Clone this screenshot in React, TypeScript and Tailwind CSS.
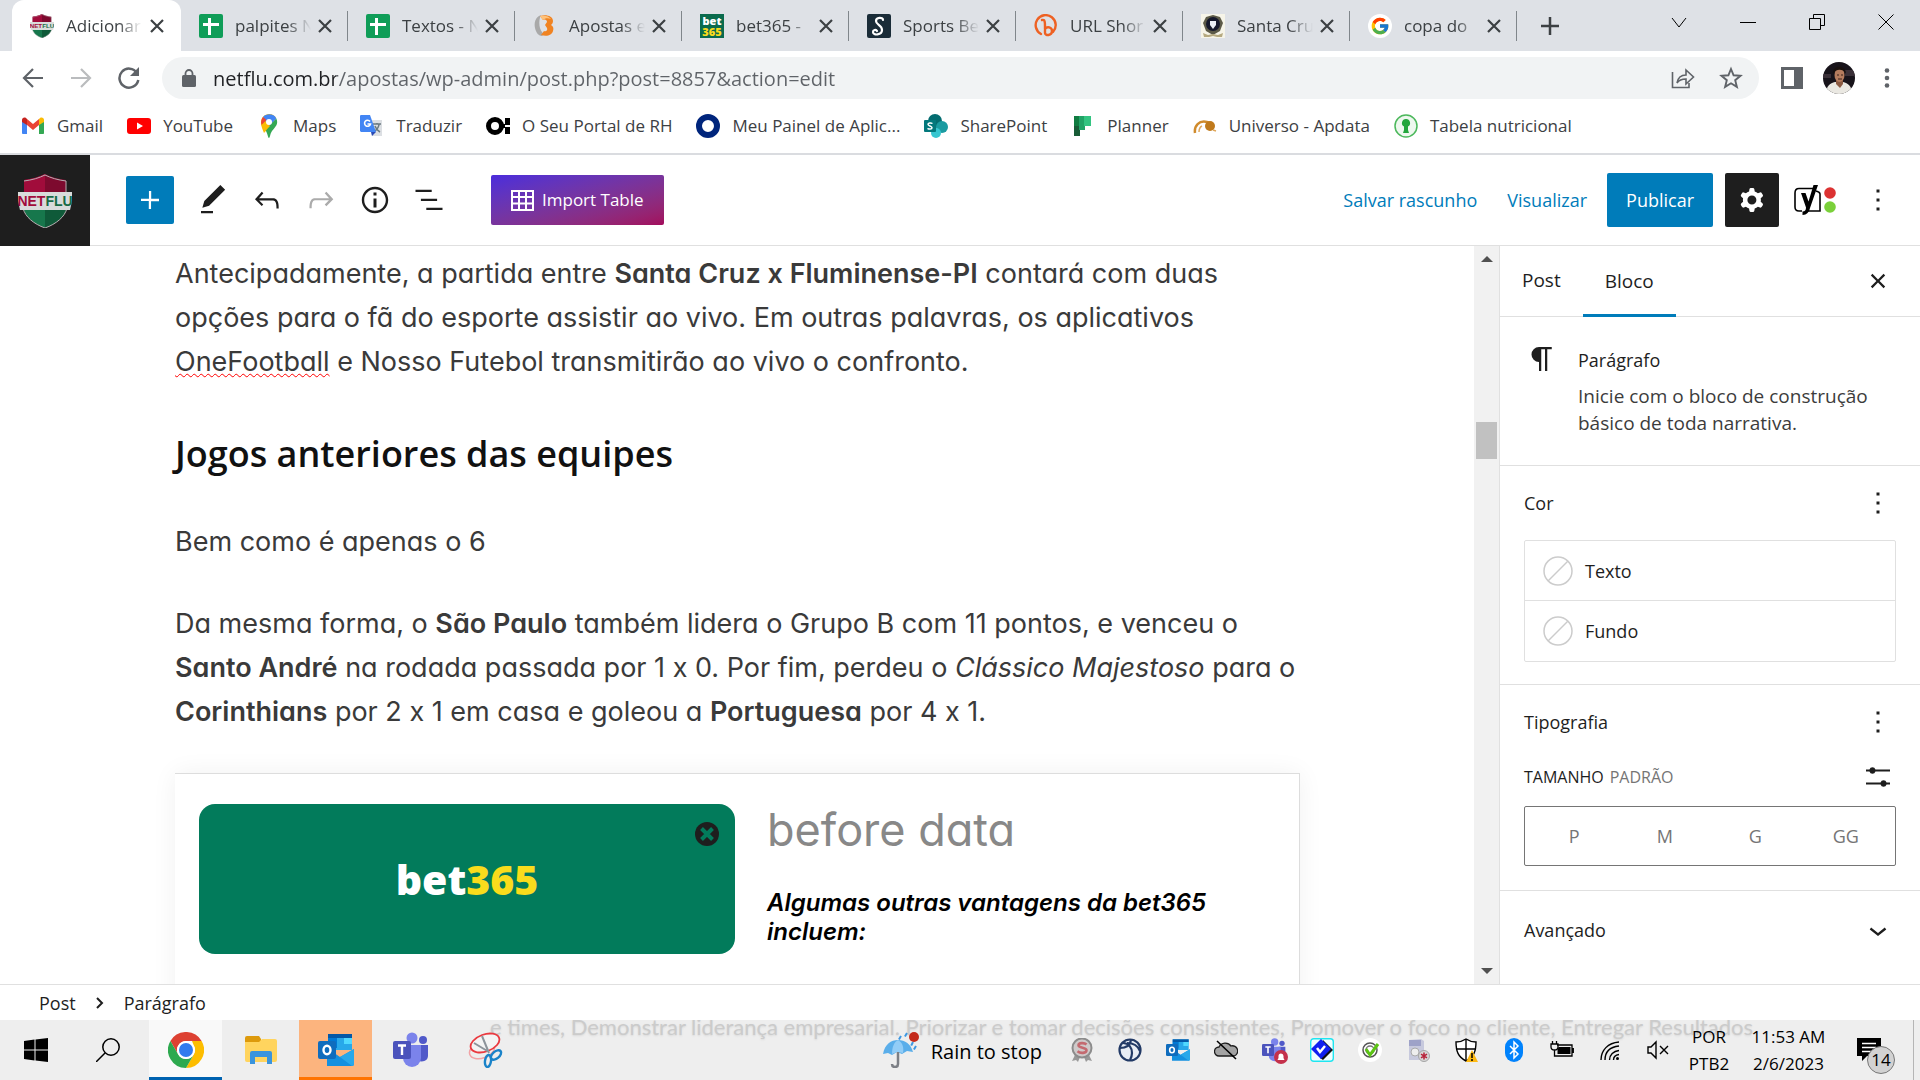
import type { ReactNode } from "react";
import { FcGoogle } from "react-icons/fc";

type Item = { label: string; icon: ReactNode };

function WpIcon({ d, className = "size-9" }: { d: string; className?: string }) {
  return (
    <svg viewBox="0 0 24 24" className={className} fill="currentColor" fillRule="evenodd" aria-hidden="true">
      <path d={d} />
    </svg>
  );
}

const paths = {
  plus: "M18 11.2h-5.2V6h-1.5v5.2H6v1.5h5.2V18h1.5v-5.2H18z",
  edit: "M20.1 5.1L16.9 2 6.2 12.7l-1.3 4.4 4.5-1.3L20.1 5.1zM4 20.8h8v-1.5H4v1.5z",
  undo: "M18.3 11.7c-.6-.6-1.4-.9-2.3-.9H6.7l2.9-3.3-1.1-1-4.5 5L8.5 16l1-1-2.7-2.7H16c.5 0 .9.2 1.3.5 1 1 1 3.4 1 4.5v.3h1.5v-.2c0-1.5 0-4.3-1.5-5.7z",
  redo: "M15.6 6.5l-1.1 1 2.9 3.3H8c-.9 0-1.7.3-2.3.9-1.4 1.5-1.4 4.2-1.4 5.6v.2h1.5v-.3c0-1.1 0-3.5 1-4.5.3-.3.7-.5 1.3-.5h9.2L14.5 15l1.1 1.1 4.6-4.6-4.6-5z",
  info: "M12 3.2c-4.8 0-8.8 3.9-8.8 8.8 0 4.8 3.9 8.8 8.8 8.8 4.8 0 8.8-3.9 8.8-8.8 0-4.8-4-8.8-8.8-8.8zm0 16c-4 0-7.2-3.3-7.2-7.2C4.8 8 8 4.8 12 4.8s7.2 3.3 7.2 7.2c0 4-3.2 7.2-7.2 7.2zM11 17h2v-6h-2v6zm0-8h2V7h-2v2z",
  list: "M13.8 5.2H3v1.5h10.8V5.2zm-3.6 12v1.5H21v-1.5H10.2zm7.2-6H6.6v1.5h10.8v-1.5z",
  more: "M13 19h-2v-2h2v2zm0-6h-2v-2h2v2zm0-6h-2V5h2v2z",
  cog: "M10.289 4.836A1 1 0 0111.275 4h1.306a1 1 0 01.987.836l.244 1.466c.787.26 1.503.679 2.108 1.218l1.393-.522a1 1 0 011.216.437l.653 1.13a1 1 0 01-.23 1.273l-1.148.944a6.025 6.025 0 010 2.435l1.149.946a1 1 0 01.23 1.272l-.653 1.13a1 1 0 01-1.216.437l-1.394-.522c-.605.54-1.32.958-2.108 1.218l-.244 1.466a1 1 0 01-.987.836h-1.306a1 1 0 01-.986-.836l-.244-1.466a5.995 5.995 0 01-2.108-1.218l-1.394.522a1 1 0 01-1.217-.436l-.653-1.131a1 1 0 01.23-1.272l1.149-.946a6.026 6.026 0 010-2.435l-1.148-.944a1 1 0 01-.23-1.272l.653-1.131a1 1 0 011.217-.437l1.393.522a5.994 5.994 0 012.108-1.218l.244-1.466zM14.929 12a3 3 0 11-6 0 3 3 0 016 0z",
  close: "M12 13.06l3.712 3.713 1.061-1.06L13.061 12l3.712-3.712-1.06-1.06L12 10.938 8.288 7.227l-1.061 1.06L10.939 12l-3.712 3.712 1.06 1.061L12 13.061z",
  chevronDown: "M17.5 11.6L12 16l-5.5-4.4.9-1.2L12 14l4.5-3.6 1 1.2z",
  paragraph: "M9.996 14v-.225H10V20h1.5V5.5H14V20h1.5V5.5h3V4H9.996a5 5 0 000 10z",
  sliders: "M4 7h2.3a2.1 2.1 0 014 0H20v1.4h-9.7a2.1 2.1 0 01-4 0H4V7zm0 8.6h9.7a2.1 2.1 0 014 0H20V17h-2.3a2.1 2.1 0 01-4 0H4v-1.400z",
};

function NetfluLogo({ className = "size-6" }: { className?: string }) {
  return (
    <svg viewBox="0 0 54 54" className={className} aria-hidden="true">
      <path d="M6 6C14 5 21 3 27 0c6 3 13 5 21 6v14H6z" fill="#7d0a2e" />
      <path d="M6 6C14 5 21 3 27 0v20H6z" fill="#a10c3b" />
      <path d="M5 33h44c-2 10-11 17-22 21C16 50 7 43 5 33z" fill="#17774c" />
      <path d="M27 33h22c-2 10-11 17-22 21z" fill="#0f5a39" />
      <path d="M6 7C14 6 21 4 27 1c6 3 13 5 21 6v12M5 34c2 9 11 16 22 20 11-4 20-11 22-20" fill="none" stroke="#b9aeb2" strokeWidth="1" />
      <path d="M0 18h54v9l-2 9H2L0 27z" fill="#d9dcdb" />
      <text x="27" y="32" textAnchor="middle" fontFamily="Liberation Sans Narrow, Liberation Sans, sans-serif" fontWeight="700" fontSize="14" fill="#a10c3b">
        NET<tspan fill="#176b45">FLU</tspan>
      </text>
    </svg>
  );
}

function SheetsIcon() {
  return (
    <svg viewBox="0 0 24 24" className="size-6" aria-hidden="true">
      <rect width="24" height="24" rx="2" fill="#0f9d58" />
      <path d="M9 4h3v5h8v3h-8v9H9v-9H4V9h5z" fill="#fff" />
    </svg>
  );
}

const tabs: (Item & { active?: boolean })[] = [
  { label: "Adicionar", icon: <NetfluLogo />, active: true },
  { label: "palpites N", icon: <SheetsIcon /> },
  { label: "Textos - N", icon: <SheetsIcon /> },
  {
    label: "Apostas e",
    icon: (
      <svg viewBox="0 0 24 24" className="size-6" aria-hidden="true">
        <path d="M8 1C2 3 1 9 2 14c1 5 4 8 7 8l2-2C6 17 5 7 8 1z" fill="#a9a9a9" />
        <path d="M7 2c6-2 13 0 13 5 0 2-1 3-2 4 2 1 3 3 2 6-1 4-6 6-12 4l3-4c2 1 4-1 3-3l-2-3 2-3c0-2-2-3-4-2z" fill="#f08322" />
        <path d="M7 2c5-1 9 0 11 3-3-1-6-1-8 1z" fill="#ffc27a" />
      </svg>
    ),
  },
  {
    label: "bet365 -",
    icon: (
      <svg viewBox="0 0 24 24" className="size-6" aria-hidden="true">
        <rect width="24" height="24" fill="#0a6b4d" />
        <text x="12" y="10.500" textAnchor="middle" fontFamily="Open Sans, sans-serif" fontWeight="800" fontSize="11" fill="#fff">bet</text>
        <text x="12" y="22" textAnchor="middle" fontFamily="Open Sans, sans-serif" fontWeight="800" fontSize="11" fill="#f9dc1c">365</text>
      </svg>
    ),
  },
  {
    label: "Sports Be",
    icon: (
      <svg viewBox="0 0 24 24" className="size-6" aria-hidden="true">
        <rect width="24" height="24" rx="2" fill="#1a2c38" />
        <path d="M16 6c0-3-7-3-7 1 0 4 6 4 6 9 0 5-9 6-9 2 0-2 3-3 4-1" fill="none" stroke="#fff" strokeWidth="2.200" strokeLinecap="round" />
      </svg>
    ),
  },
  {
    label: "URL Shor",
    icon: (
      <svg viewBox="0 0 24 24" className="size-6" fill="none" stroke="#ee6123" strokeWidth="2.400" strokeLinecap="round" aria-hidden="true">
        <path d="M7 20A10 10 0 1 1 19 18" />
        <path d="M8 6c3-1 3 3 3 6v7c0 3 7 3 7-2 0-4-5-5-7-2" />
      </svg>
    ),
  },
  {
    label: "Santa Cru",
    icon: (
      <svg viewBox="0 0 24 24" className="size-6" aria-hidden="true">
        <rect width="24" height="24" fill="#f6f4e8" />
        <path d="M5 3l7-2 7 2 3 6-3 8-7 4-7-4-3-8z" fill="#5c5a48" />
        <circle cx="12" cy="10" r="7" fill="#15182c" />
        <path d="M9 7h6v4l-3 4-3-4z" fill="#e9edf5" />
        <path d="M2 19l5 2 5-1 5 1 5-2-1 4h-5l-4-1-4 1H3z" fill="#b5a980" />
      </svg>
    ),
  },
  {
    label: "copa do",
    icon: (
      <span className="flex size-6 items-center justify-center rounded-full bg-white">
        <FcGoogle className="size-5" />
      </span>
    ),
  },
];

const bookmarks: Item[] = [
  {
    label: "Gmail",
    icon: (
      <svg viewBox="0 0 24 24" className="size-6" aria-hidden="true">
        <path d="M1 6v13c0 1 1 1 1 1h4V10z" fill="#4285f4" />
        <path d="M23 6v13c0 1-1 1-1 1h-4V10z" fill="#34a853" />
        <path d="M1 6c0-2 2-3 4-2l1 1v6L1 8z" fill="#c5221f" />
        <path d="M23 6c0-2-2-3-4-2l-1 1v6l5-3z" fill="#fbbc04" />
        <path d="M6 5l6 5 6-5v6l-6 5-6-5z" fill="#ea4335" />
      </svg>
    ),
  },
  {
    label: "YouTube",
    icon: (
      <svg viewBox="0 0 24 24" className="size-6" aria-hidden="true">
        <rect y="4" width="24" height="16" rx="3" fill="#f00" />
        <path d="M10 8.500v7l6-3.500z" fill="#fff" />
      </svg>
    ),
  },
  {
    label: "Maps",
    icon: (
      <svg viewBox="0 0 24 24" className="size-6" aria-hidden="true">
        <path d="M12 0c3.500 0 6 1.700 7.300 4.400L7 19C5.500 15 4 12.500 4 8.500 4 3.500 8 0 12 0z" fill="#fbbc04" />
        <path d="M19.300 4.400C22 10 18 13 15 17c-2 3-2 7-3 7s-1-3-3-7l-1-1.500z" fill="#34a853" />
        <path d="M6 3c3-4 11-4 13.300 1.400L12 12 9 8z" fill="#4285f4" />
        <path d="M4.500 11l5-5L6 3C4 5.500 3.700 8.500 4.500 11z" fill="#ea4335" />
        <path d="M4.500 11L10 9l3 3-5 5.500C6 14.500 5 13 4.500 11z" fill="#fbbc04" />
        <circle cx="12" cy="8" r="3" fill="#fff" />
      </svg>
    ),
  },
  {
    label: "Traduzir",
    icon: (
      <svg viewBox="0 0 24 24" className="size-6" aria-hidden="true">
        <path d="M9 6h13v16H12z" fill="#dcdfe3" />
        <path d="M13 10h8M17 9v1m2 0c0 4-3 6-5 8m1-6c1 3 3 5 5 6" stroke="#6a7a80" strokeWidth="1.500" fill="none" />
        <path d="M0 2c0-1 1-1 1-1h9l6 17H1l-1-1z" fill="#4285f4" />
        <path d="M11 18h5l-4 4z" fill="#2a4bb5" />
        <path d="M10 7.500a3 3 0 1 0 .5 2.500H7.500" stroke="#fff" strokeWidth="1.600" fill="none" />
      </svg>
    ),
  },
  {
    label: "O Seu Portal de RH",
    icon: (
      <svg viewBox="0 0 24 24" className="size-6" aria-hidden="true">
        <circle cx="9" cy="12" r="6.500" fill="none" stroke="#000" strokeWidth="5" />
        <path d="M19 4h5v7h-5zM19 13h5v7h-5zM14 10h5v4h-5z" fill="#000" />
      </svg>
    ),
  },
  {
    label: "Meu Painel de Aplic...",
    icon: (
      <svg viewBox="0 0 24 24" className="size-6" aria-hidden="true">
        <circle cx="12" cy="12" r="9" fill="none" stroke="#00257c" strokeWidth="6" />
      </svg>
    ),
  },
  {
    label: "SharePoint",
    icon: (
      <svg viewBox="0 0 24 24" className="size-6" aria-hidden="true">
        <circle cx="11" cy="7" r="7" fill="#036c70" />
        <circle cx="18" cy="13" r="6" fill="#1a9ba1" />
        <circle cx="12" cy="19" r="5" fill="#37c6d0" />
        <rect y="6" width="12" height="12" rx="1" fill="#03787c" />
        <path d="M8.500 9.500C7 8.500 4 8.700 4 10.300S8 12 8 13.700s-3 1.700-4.500.6" stroke="#fff" strokeWidth="1.500" fill="none" />
      </svg>
    ),
  },
  {
    label: "Planner",
    icon: (
      <svg viewBox="0 0 24 24" className="size-6" aria-hidden="true">
        <path d="M3 2h6v20H3z" fill="#185c37" />
        <path d="M3 2h6v10H3z" fill="#107c41" />
        <path d="M8 2h6v14H8z" fill="#21a366" />
        <path d="M13 2h7v10h-7z" fill="#33c481" />
      </svg>
    ),
  },
  {
    label: "Universo - Apdata",
    icon: (
      <svg viewBox="0 0 24 24" className="size-6" aria-hidden="true">
        <path d="M2 19c-1-7 4-13 12-11 3 1 4 3 4 5" fill="none" stroke="#d08b2c" strokeWidth="2.500" />
        <circle cx="17" cy="12" r="5" fill="#c07a1c" />
        <path d="M6 18c0-3 1-5 3-6M20 16l3 1" stroke="#e0a85c" strokeWidth="1.500" fill="none" />
      </svg>
    ),
  },
  {
    label: "Tabela nutricional",
    icon: (
      <svg viewBox="0 0 24 24" className="size-6" aria-hidden="true">
        <circle cx="12" cy="12" r="11" fill="#eef8ef" stroke="#4cb85c" strokeWidth="1.500" />
        <path d="M12 5a4 4 0 0 0-2 7.500V16l-1 3h6l-1-3v-3.500A4 4 0 0 0 12 5z" fill="#22a63c" />
      </svg>
    ),
  },
];

function TabStrip() {
  return (
    <div className="flex h-[51px] shrink-0 bg-[#dee1e6] pl-3">
      {tabs.map((tab) => (
        <div
          key={tab.label}
          className={`relative flex h-full items-center pl-[18px] ${tab.active ? "w-[169px] rounded-t-xl bg-white pr-4" : "w-[167px] pr-[15px]"}`}
        >
          <span className="shrink-0">{tab.icon}</span>
          <span className="ml-3 w-20 whitespace-nowrap text-[17px] text-[#3c4043] [mask-image:linear-gradient(90deg,#000_65%,transparent_95%)]">
            {tab.label}
          </span>
          <button aria-label="Fechar guia" className="ml-auto text-[#3c4043]">
            <svg viewBox="0 0 16 16" className="size-4" stroke="currentColor" strokeWidth="2.200" aria-hidden="true">
              <path d="M2 2l12 12M14 2L2 14" />
            </svg>
          </button>
          {!tab.active && <span className="absolute right-0 top-[11px] h-[30px] w-px bg-[#80868b]" />}
        </div>
      ))}
      <button aria-label="Nova guia" className="ml-6 self-center text-[#3c4043]">
        <svg viewBox="0 0 18 18" className="size-[18px]" stroke="currentColor" strokeWidth="2.500" aria-hidden="true">
          <path d="M9 0v18M0 9h18" />
        </svg>
      </button>
      <div className="ml-auto flex h-[43px] text-black">
        {[
          ["Pesquisar guias", "M1 4l7 9 7-9"],
          ["Minimizar", "M0 8.500h16"],
          ["Restaurar", "M.5 4.500h11v11H.5zM4.500 4V.5h11v11H12"],
          ["Fechar", "M.5.5l15 15M15.500.5l-15 15"],
        ].map(([label, d]) => (
          <button key={label} aria-label={label} className="flex w-[69px] items-center justify-center">
            <svg viewBox="0 0 16 16" className="size-4" fill="none" stroke="currentColor" aria-hidden="true">
              <path d={d} />
            </svg>
          </button>
        ))}
      </div>
    </div>
  );
}

function AddressBar() {
  return (
    <div className="flex shrink-0 items-center bg-white px-[21px] pt-1.5 text-[#5f6368]">
      <div className="flex gap-6">
        <button aria-label="Voltar">
          <svg viewBox="0 0 24 24" className="size-6" fill="none" stroke="currentColor" strokeWidth="2.200" aria-hidden="true">
            <path d="M22 12H3M12 3l-9 9 9 9" />
          </svg>
        </button>
        <button aria-label="Avançar" className="text-[#babcbe]">
          <svg viewBox="0 0 24 24" className="size-6" fill="none" stroke="currentColor" strokeWidth="2.200" aria-hidden="true">
            <path d="M2 12h19M12 3l9 9-9 9" />
          </svg>
        </button>
        <button aria-label="Recarregar">
          <svg viewBox="0 0 24 24" className="size-6" fill="none" stroke="currentColor" strokeWidth="2.500" aria-hidden="true">
            <path d="M20 7a9.500 9.500 0 1 0 1.300 7" />
            <path d="M22 1v9h-9z" fill="currentColor" stroke="none" />
          </svg>
        </button>
      </div>
      <div className="ml-[21px] flex h-[42px] flex-1 items-center rounded-full bg-[#f1f3f4] pl-[20px] pr-4">
        <svg viewBox="0 0 14 18" className="mr-[17px] h-[18px] w-3.5 shrink-0" aria-hidden="true">
          <rect y="6" width="14" height="12" rx="1.500" fill="#5f6368" />
          <path d="M3.500 7V4.500a3.500 3.500 0 0 1 7 0V7" fill="none" stroke="#5f6368" strokeWidth="1.800" />
        </svg>
        <input
          aria-label="Barra de endereço"
          defaultValue="netflu.com.br/apostas/wp-admin/post.php?post=8857&action=edit"
          className="min-w-0 flex-1 bg-[linear-gradient(90deg,#202124_123px,#5f6368_123px)] bg-clip-text pt-0.5 text-xl text-transparent outline-none"
        />
        <button aria-label="Compartilhar" className="mr-6">
          <svg viewBox="0 0 24 24" className="size-6" fill="none" stroke="currentColor" strokeWidth="1.600" aria-hidden="true">
            <path d="M1.500 6v15.500H18V17" />
            <path d="M6 17c1-6 5-8 9-8V4l7.500 7-7.500 7v-5c-4 0-7 1-9 4z" />
          </svg>
        </button>
        <button aria-label="Adicionar aos favoritos">
          <svg viewBox="0 0 24 24" className="size-6" fill="none" stroke="currentColor" strokeWidth="1.900" aria-hidden="true">
            <path d="M12 3l2.600 6.300 6.900.5-5.300 4.400 1.700 6.700L12 17.300 6.100 20.900l1.700-6.700-5.300-4.400 6.900-.5z" />
          </svg>
        </button>
      </div>
      <button aria-label="Painel lateral" className="ml-[22px]">
        <svg viewBox="0 0 22 22" className="size-[22px]" aria-hidden="true">
          <path d="M0 0h22v22H0zM3 3v16h10V3z" fill="currentColor" fillRule="evenodd" />
        </svg>
      </button>
      <button aria-label="Perfil" className="ml-5 size-8 overflow-hidden rounded-full">
        <svg viewBox="0 0 32 32" className="size-8" aria-hidden="true">
          <rect width="32" height="32" fill="#17131a" />
          <path d="M22 8h10v6H22zM0 12h8v4H0z" fill="#3a3038" />
          <path d="M3 32c0-8 4-11 9-12h8c5 1 9 4 9 12z" fill="#eae8e2" />
          <path d="M13 16h7v6l-3 4-4-4z" fill="#8a5a42" />
          <ellipse cx="16.500" cy="13" rx="5" ry="7" fill="#b57c5e" />
          <path d="M10 12c-1-9 13-10 13 0-2-5-10-6-13 0z" fill="#18100d" />
          <path d="M14 13h2M18 13h2M15 17h4" stroke="#3c221a" />
        </svg>
      </button>
      <button aria-label="Menu" className="ml-5">
        <svg viewBox="0 0 24 24" className="size-6" fill="currentColor" aria-hidden="true">
          <circle cx="12" cy="4.500" r="2.300" />
          <circle cx="12" cy="12" r="2.300" />
          <circle cx="12" cy="19.500" r="2.300" />
        </svg>
      </button>
    </div>
  );
}

function BookmarksBar() {
  return (
    <nav className="flex h-14 shrink-0 items-center gap-6 border-b-2 border-[#dadce0] bg-white pl-[21px]">
      {bookmarks.map((b) => (
        <a key={b.label} href="#" className="flex items-center gap-3 whitespace-nowrap text-[17px] text-[#3c4043]">
          {b.icon}
          {b.label}
        </a>
      ))}
    </nav>
  );
}

function EditorHeader() {
  return (
    <header className="flex h-[91px] shrink-0 items-center border-b border-[#e0e0e0] bg-white pr-6 text-[#1e1e1e]">
      <a href="#" aria-label="Ver posts" className="flex h-[92px] w-[90px] items-center justify-center self-start bg-[#1e1e1e]">
        <NetfluLogo className="size-[54px]" />
      </a>
      <button aria-label="Adicionar bloco" className="ml-9 flex size-12 items-center justify-center rounded-xs bg-[#007cba] text-white">
        <WpIcon d={paths.plus} />
      </button>
      <div className="ml-[21px] flex gap-[18px]">
        <button aria-label="Ferramentas"><WpIcon d={paths.edit} /></button>
        <button aria-label="Desfazer"><WpIcon d={paths.undo} /></button>
        <button aria-label="Refazer" className="text-[#ababab]"><WpIcon d={paths.redo} /></button>
        <button aria-label="Detalhes"><WpIcon d={paths.info} /></button>
        <button aria-label="Visualização em lista"><WpIcon d={paths.list} /></button>
      </div>
      <button className="ml-11 flex h-[50px] items-center gap-2 rounded-xs bg-linear-to-br from-[#4b2bdc] to-[#a3095c] px-5 text-[17px] font-medium text-white">
        <svg viewBox="0 0 23 21" className="h-[21px] w-[23px]" fill="none" stroke="currentColor" strokeWidth="2" aria-hidden="true">
          <path d="M1 1h21v19H1zM1 7h21M1 13.500h21M8 1v19M15 1v19" />
        </svg>
        Import Table
      </button>
      <div className="ml-auto flex items-center text-lg">
        <button className="mr-[30px] text-[#007cba]">Salvar rascunho</button>
        <button className="mr-5 text-[#007cba]">Visualizar</button>
        <button className="h-[54px] rounded-xs bg-[#007cba] px-[19px] font-medium text-white">Publicar</button>
        <button aria-label="Opções" className="ml-3 flex size-[54px] items-center justify-center rounded-xs bg-[#1e1e1e] text-white">
          <WpIcon d={paths.cog} />
        </button>
        <button aria-label="Yoast SEO" className="ml-[15px]">
          <svg viewBox="0 0 44 32" className="h-8 w-11" aria-hidden="true">
            <path d="M19 4.500H5Q1 4.500 1 9v14q0 4 4 4h3M22 7q4 1 4 3v17H13" fill="none" stroke="#000" strokeWidth="1.600" />
            <path d="M7 9h4.500l3 8.500L19.500 1H24l-8 23c-1 4-3 7-7.500 7v-3.500c2.500 0 3.500-1.500 3.500-4z" fill="#000" />
            <circle cx="36" cy="9" r="5.800" fill="#dc3232" />
            <circle cx="36" cy="23" r="5.800" fill="#7ad03a" />
          </svg>
        </button>
        <button aria-label="Opções do editor" className="ml-[22px]"><WpIcon d={paths.more} /></button>
      </div>
    </header>
  );
}

function Canvas() {
  return (
    <main className="min-w-0 flex-1 overflow-hidden bg-white pl-[175px] pt-1.5 font-[Inter,sans-serif] text-[27px] leading-[44px] text-[#3a3a3a] [font-feature-settings:'cv11','calt'_0]">
      <div className="w-[1125px] max-w-full">
        <p>
          Antecipadamente, a partida entre <strong className="font-semibold">Santa Cruz x Fluminense-PI</strong> contará com duas
          <br />
          opções para o fã do esporte assistir ao vivo. Em outras palavras, os aplicativos
          <br />
          <span className="underline decoration-[#f00] decoration-wavy decoration-1 underline-offset-2">OneFootball</span> e Nosso Futebol transmitirão ao vivo o confronto.
        </p>
        <h2 className="mt-[46px] font-['Open_Sans',sans-serif] text-4xl leading-[48px] font-semibold text-[#111]">Jogos anteriores das equipes</h2>
        <p className="mt-[42px]">Bem como é apenas o 6</p>
        <p className="mt-[38px]">
          Da mesma forma, o <strong className="font-semibold">São Paulo</strong> também lidera o Grupo B com 11 pontos, e venceu o
          <br />
          <strong className="font-semibold">Santo André</strong> na rodada passada por 1 x 0. Por fim, perdeu o <em>Clássico Majestoso</em> para o
          <br />
          <strong className="font-semibold">Corinthians</strong> por 2 x 1 em casa e goleou a <strong className="font-semibold">Portuguesa</strong> por 4 x 1.
        </p>
        <section className="mt-[39px] flex h-[400px] gap-8 border-t border-r border-[#dddddd] pl-6 pt-[30px] shadow-[0_0_24px_rgba(0,0,0,0.06)]">
          <div className="relative flex h-[150px] w-[536px] shrink-0 items-center justify-center rounded-2xl bg-[#027b5b] font-['Open_Sans',sans-serif] text-[41px] font-extrabold text-white">
            <span>bet<span className="text-[#f9dc1c]">365</span></span>
            <button aria-label="Remover imagem" className="absolute right-4 top-[18px]">
              <svg viewBox="0 0 24 24" className="size-6" aria-hidden="true">
                <circle cx="12" cy="12" r="12" fill="#1e1e1e" />
                <path d="M6.500 6.500l11 11M17.500 6.500l-11 11" stroke="#027b5b" strokeWidth="4" />
              </svg>
            </button>
          </div>
          <div className="min-w-0 flex-1 pr-[70px]">
            <p className="mb-8 text-[45px] leading-[52px] text-[#888]">before data</p>
            <p className="text-2xl leading-[29px] font-semibold text-black">
              <em>Algumas outras vantagens da bet365 incluem:</em>
            </p>
          </div>
        </section>
      </div>
    </main>
  );
}

function Scrollbar() {
  return (
    <div className="flex w-[25px] shrink-0 flex-col items-center bg-[#f1f1f1] py-2.5" aria-hidden="true">
      <svg viewBox="0 0 12 6" className="h-1.5 w-3"><path d="M0 6l6-6 6 6z" fill="#505050" /></svg>
      <div className="mt-40 h-[37px] w-[21px] bg-[#c1c1c1]" />
      <svg viewBox="0 0 12 6" className="mt-auto h-1.5 w-3"><path d="M0 0l6 6 6-6z" fill="#505050" /></svg>
    </div>
  );
}

function NoColor() {
  return (
    <svg viewBox="0 0 30 30" className="size-[30px]" fill="none" stroke="#ccc" strokeWidth="1.500" aria-hidden="true">
      <circle cx="15" cy="15" r="14" />
      <path d="M5 25L25 5" />
    </svg>
  );
}

function Sidebar() {
  return (
    <aside className="flex w-[421px] shrink-0 flex-col border-l border-[#e0e0e0] bg-white text-lg text-[#1e1e1e]">
      <div className="flex h-[71px] shrink-0 items-stretch border-b border-[#e0e0e0] pr-6 text-[19px] font-medium">
        <button className="px-[22px]">Post</button>
        <button className="-mb-px border-b-3 border-[#007cba] px-[22px] pt-[3px]">Bloco</button>
        <button aria-label="Fechar configurações" className="ml-auto"><WpIcon d={paths.close} /></button>
      </div>
      <div className="flex gap-3 border-b border-[#e0e0e0] px-6 pt-6 pb-7">
        <WpIcon d={paths.paragraph} className="size-9 shrink-0" />
        <div className="pl-1.5">
          <h2 className="mt-1 mb-2 leading-[30px] font-medium">Parágrafo</h2>
          <p className="w-[300px] text-[19px] leading-[27px] text-[#3c3c3c]">Inicie com o bloco de construção básico de toda narrativa.</p>
        </div>
      </div>
      <section className="border-b border-[#e0e0e0] px-6 pb-[22px]">
        <div className="flex h-[74px] items-center justify-between">
          <h2 className="font-medium">Cor</h2>
          <button aria-label="Opções de cor"><WpIcon d={paths.more} /></button>
        </div>
        <div className="divide-y divide-[#e0e0e0] rounded-xs border border-[#e0e0e0]">
          {["Texto", "Fundo"].map((label) => (
            <button key={label} className="flex h-[60px] w-full items-center gap-3 pl-[18px]">
              <NoColor />
              {label}
            </button>
          ))}
        </div>
      </section>
      <section className="border-b border-[#e0e0e0] px-6 pb-6">
        <div className="flex h-[74px] items-center justify-between">
          <h2 className="font-medium">Tipografia</h2>
          <button aria-label="Opções de tipografia"><WpIcon d={paths.more} /></button>
        </div>
        <div className="mb-[11px] flex h-9 items-center text-base font-medium">
          TAMANHO <span className="ml-1.5 text-[#757575]">PADRÃO</span>
          <button aria-label="Definir tamanho personalizado" className="ml-auto"><WpIcon d={paths.sliders} /></button>
        </div>
        <div className="grid h-[60px] grid-cols-4 rounded-xs border border-[#757575] px-1 text-[#757575]">
          {["P", "M", "G", "GG"].map((s) => (
            <button key={s}>{s}</button>
          ))}
        </div>
      </section>
      <button className="flex h-[78px] items-center justify-between px-6 font-medium">
        Avançado
        <WpIcon d={paths.chevronDown} />
      </button>
    </aside>
  );
}

function OutlookIcon({ className }: { className: string }) {
  return (
    <svg viewBox="0 0 36 36" className={className} aria-hidden="true">
      <path d="M10 2h24v16H10z" fill="#28a8ea" />
      <path d="M10 2h24v4H10z" fill="#0358a7" />
      <path d="M10 6h9v10h-9z" fill="#0078d4" />
      <path d="M26 6h8v6h-8z" fill="#50d9ff" />
      <path d="M9 34V16l13 9 14-8v15q0 2-2 2z" fill="#1490df" />
      <path d="M36 17v15q0 2-2 2L22 25z" fill="#28a8ea" />
      <rect y="9" width="18" height="18" rx="2" fill="#0f6cbd" />
      <ellipse cx="9" cy="18" rx="3.500" ry="4.200" fill="none" stroke="#fff" strokeWidth="2.400" />
    </svg>
  );
}

function TeamsIcon({ className }: { className: string }) {
  return (
    <svg viewBox="0 0 36 36" className={className} aria-hidden="true">
      <circle cx="30" cy="8" r="4" fill="#5059c9" />
      <path d="M25 13h10v11a6 6 0 0 1-10 4z" fill="#5059c9" />
      <circle cx="19" cy="6" r="5.500" fill="#7b83eb" />
      <path d="M10 13h18v13a9 9 0 0 1-18 0z" fill="#7b83eb" />
      <rect y="9" width="18" height="18" rx="2" fill="#4b53bc" />
      <path d="M5 13.500h8M9 13.500V23" stroke="#fff" strokeWidth="2.400" />
    </svg>
  );
}

const trayIcons: Item[] = [
  {
    label: "Certificado",
    icon: (
      <svg viewBox="0 0 24 24" className="size-6" fill="none" aria-hidden="true">
        <path d="M5 17l-3 6 4-1 2 2 2-5M19 17l3 6-4-1-2 2-2-5" fill="#999" />
        <circle cx="12" cy="10" r="9.500" fill="#cfcaca" stroke="#8c8c8c" strokeWidth="2" />
        <path d="M16.500 6.500c-2-2-8-2-8 .8 0 3 8 2 8 5s-6 3.500-9 1" stroke="#c46a70" strokeWidth="2.600" />
      </svg>
    ),
  },
  {
    label: "VPN",
    icon: (
      <svg viewBox="0 0 24 24" className="size-6" fill="none" stroke="#223a66" strokeWidth="2.200" aria-hidden="true">
        <circle cx="12" cy="12" r="10.500" fill="#e8edf4" />
        <path d="M5 5c6 0 9 5 9 10 0 3-1 5-2 7M2 10c6 0 10-2 11-8M9 5c6 0 11 3 13 8" />
      </svg>
    ),
  },
  { label: "Outlook", icon: <OutlookIcon className="size-6" /> },
  {
    label: "OneDrive",
    icon: (
      <svg viewBox="0 0 24 24" className="size-6" aria-hidden="true">
        <path d="M5 18a4.500 4.500 0 0 1 0-9 7 7 0 0 1 12-1 5 5 0 0 1 3 10z" fill="#a3a3a3" stroke="#1c1c1c" strokeWidth="1.300" />
        <path d="M3 3l19 18" stroke="#000" strokeWidth="1.600" />
      </svg>
    ),
  },
  {
    label: "Teams",
    icon: (
      <span className="relative block size-6">
        <TeamsIcon className="size-6" />
        <svg viewBox="0 0 14 14" className="absolute -right-0.5 -bottom-0.5 size-3.5" aria-hidden="true">
          <circle cx="7" cy="7" r="7" fill="#c4314b" />
          <path d="M3.500 10h7L9.500 8V6a2.500 2.500 0 0 0-5 0v2z" fill="#fff" />
        </svg>
      </span>
    ),
  },
  {
    label: "Segurança",
    icon: (
      <svg viewBox="0 0 24 24" className="size-6" aria-hidden="true">
        <rect x=".7" y=".7" width="22.600" height="22.600" rx="3" fill="#f2feff" stroke="#1fe5f0" strokeWidth="1.400" />
        <path d="M13 2l10 10-10 10-3-2z" fill="#111" />
        <path d="M11 1l10 10-10 10L1 11z" fill="#1020f0" />
        <path d="M7 10l3 4 5-6" stroke="#fff" strokeWidth="2.500" fill="none" />
      </svg>
    ),
  },
  {
    label: "Monitor",
    icon: (
      <svg viewBox="0 0 24 24" className="size-6" fill="none" aria-hidden="true">
        <circle cx="12" cy="12" r="12" fill="#fff" />
        <circle cx="12" cy="12" r="7" stroke="#555" strokeWidth="1.500" />
        <circle cx="12" cy="12" r="4" stroke="#777" strokeWidth="1.500" />
        <path d="M8 11l4 6 8-11" stroke="#5cc414" strokeWidth="3" />
      </svg>
    ),
  },
  {
    label: "Servidor",
    icon: (
      <svg viewBox="0 0 24 24" className="size-6" aria-hidden="true">
        <path d="M3 2l12-1 3 2v17l-3 2H3z" fill="#c7c9dd" />
        <path d="M3 2h12v6H3z" fill="#9ea2c8" />
        <circle cx="9" cy="14" r="4" fill="#eee" stroke="#aaa" />
        <circle cx="18" cy="18" r="5.500" fill="#d6d6d6" stroke="#a5a5a5" />
        <path d="M18 14.500v7M15 16.200l6 3.600M21 16.200l-6 3.600" stroke="#b8233a" strokeWidth="1.500" />
      </svg>
    ),
  },
  {
    label: "Windows Defender",
    icon: (
      <svg viewBox="0 0 24 24" className="size-6" aria-hidden="true">
        <path d="M12 1c3 2 6 3 10 3 0 9-2 15-10 19C4 19 2 13 2 4c4 0 7-1 10-3z" fill="#fff" stroke="#000" strokeWidth="1.400" />
        <path d="M12 1v22M2 11h20" stroke="#000" strokeWidth="1.400" />
        <path d="M18 12l6 12H12z" fill="#fdb913" />
        <path d="M18 15v5M18 21v2" stroke="#000" strokeWidth="1.500" />
      </svg>
    ),
  },
  {
    label: "Bluetooth",
    icon: (
      <svg viewBox="0 0 24 24" className="size-6" fill="none" aria-hidden="true">
        <rect x="3" width="18" height="24" rx="9" fill="#0082fc" />
        <path d="M8 8l8 8-4 4V4l4 4-8 8" stroke="#fff" strokeWidth="1.500" />
      </svg>
    ),
  },
  {
    label: "Bateria",
    icon: (
      <svg viewBox="0 0 24 24" className="size-6" fill="none" stroke="#000" strokeWidth="1.300" aria-hidden="true">
        <path d="M7 7h15v11H4.500v-6M23.300 10v5M2.500 3v3M6.500 3v3M1 6h7v3q0 3-3.500 3T1 9z" />
        <path d="M8.500 9h12v7h-13v-4z" fill="#000" stroke="none" />
      </svg>
    ),
  },
  {
    label: "Wi-Fi",
    icon: (
      <svg viewBox="0 0 24 24" className="size-6" fill="none" stroke="#000" strokeWidth="1.400" aria-hidden="true">
        <path d="M3 22C3 12 10 5 21 4M7 22c0-8 5-13 14-14M11.500 22c0-5 4-9 9.500-9.500M15.500 22c0-3 2-5 5.500-5.500" />
        <circle cx="19.500" cy="20.500" r="1.500" fill="#000" stroke="none" />
      </svg>
    ),
  },
  {
    label: "Volume",
    icon: (
      <svg viewBox="0 0 24 24" className="size-6" fill="none" stroke="#000" strokeWidth="1.400" aria-hidden="true">
        <path d="M2 9h3l5-5v16l-5-5H2zM14 8l8 8M22 8l-8 8" />
      </svg>
    ),
  },
];

function Taskbar() {
  return (
    <footer className="relative flex h-[60px] shrink-0 items-stretch overflow-hidden bg-[#eee] text-black">
      <p className="absolute -top-2 left-[490px] whitespace-nowrap font-[Lato,sans-serif] text-[22px] leading-[30px] text-[#cbcbcb] [text-shadow:0_1px_2px_#d8d8d8]">
        e times, Demonstrar liderança empresarial. Priorizar e tomar decisões consistentes, Promover o foco no cliente, Entregar Resultados
      </p>
      <button aria-label="Iniciar" className="flex w-[72px] items-center justify-center">
        <svg viewBox="0 0 24 24" className="size-6" aria-hidden="true">
          <path d="M0 3l10.500-1.500v10H0zM11.500 1.400L24 0v11.500H11.500zM0 12.500h10.500v10L0 21zM11.500 12.500H24V24l-12.500-1.500z" />
        </svg>
      </button>
      <button aria-label="Pesquisar" className="mr-[5px] flex w-[72px] items-center justify-center">
        <svg viewBox="0 0 24 24" className="size-6" fill="none" stroke="#000" strokeWidth="1.500" aria-hidden="true">
          <circle cx="15" cy="9" r="8.200" />
          <path d="M9 15l-9 9" />
        </svg>
      </button>
      <div className="relative flex gap-0.5">
        <button aria-label="Google Chrome" className="flex w-[73px] items-center justify-center border-b-3 border-[#0063b1] bg-[#f9f9f9] pt-[3px]">
          <svg viewBox="0 0 36 36" className="size-9" aria-hidden="true">
            <path d="M2.400 9A18 18 0 0 1 33.600 9H18a9 9 0 0 0-7.800 13.500z" fill="#dd4132" />
            <path d="M33.600 9A18 18 0 0 1 18 36l7.800-13.500A9 9 0 0 0 25.800 13.500L24 9z" fill="#fdbd00" />
            <path d="M18 36A18 18 0 0 1 2.400 9l7.800 13.500a9 9 0 0 0 15.600 0z" fill="#2da94f" />
            <circle cx="18" cy="18" r="9" fill="#fff" />
            <circle cx="18" cy="18" r="7" fill="#317bee" />
          </svg>
        </button>
        <button aria-label="Explorador de Arquivos" className="flex w-[73px] items-center justify-center">
          <svg viewBox="0 0 32 28" className="h-7 w-8" aria-hidden="true">
            <path d="M0 2q0-2 2-2h12l2 3v6H0z" fill="#dd9a0c" />
            <path d="M0 6h14l3-3h13q2 0 2 2v19q0 2-2 2H2q-2 0-2-2z" fill="#ffd45e" />
            <path d="M5 28V17q0-2 2-2h18q2 0 2 2v11h-5v-7H10v7z" fill="#3a94dd" />
          </svg>
        </button>
        <button aria-label="Outlook" className="flex w-[73px] items-center justify-center border-b-3 border-[#ff7300] bg-[#fcb47e] pt-[3px]">
          <OutlookIcon className="size-9" />
        </button>
        <button aria-label="Microsoft Teams" className="flex w-[73px] items-center justify-center">
          <TeamsIcon className="size-9" />
        </button>
        <button aria-label="Ferramenta de Captura" className="flex w-[73px] items-center justify-center">
          <svg viewBox="0 0 36 36" className="size-9" fill="none" aria-hidden="true">
            <ellipse cx="14" cy="18" rx="13" ry="8" stroke="#f2a3a6" strokeWidth="1.500" transform="rotate(-20 14 18)" />
            <ellipse cx="17" cy="11" rx="15" ry="8.500" fill="#f4f4f4" stroke="#ea3a40" strokeWidth="1.800" transform="rotate(-20 17 11)" />
            <path d="M14 4l7 17M6 11l15 9" stroke="#8d949b" strokeWidth="2" />
            <ellipse cx="20" cy="29" rx="3" ry="6" stroke="#1a83c9" strokeWidth="2.400" transform="rotate(8 20 29)" />
            <ellipse cx="28" cy="23" rx="3.500" ry="6" stroke="#1a83c9" strokeWidth="2.400" transform="rotate(-130 28 23)" />
          </svg>
        </button>
      </div>
      <div className="relative ml-auto flex items-center">
        <button className="mr-4 flex items-center gap-3 text-xl">
          <svg viewBox="0 0 36 36" className="size-9" aria-hidden="true">
            <path d="M18 4l-3 5M24 1l-3 5M33 14l-3 5M30 10l-2 4" stroke="#3b97e3" strokeWidth="2" strokeDasharray="4 2" />
            <path d="M0 22C2 12 8 8 15 8s13 4 15 12l-6-1-5 3-5-2-5 3-4-2z" fill="#5aaeea" />
            <path d="M9 22c0-7 2-12 6-14 5 3 6 8 5 13l-6-1z" fill="#92cdf7" />
            <path d="M15 20v12q0 3-3 3t-3-3" fill="none" stroke="#7c7f85" strokeWidth="2.500" />
            <circle cx="31" cy="5" r="5" fill="#c42b1c" />
          </svg>
          <span className="pt-1">Rain to stop</span>
        </button>
        <div className="flex">
          {trayIcons.map((t) => (
            <button key={t.label} aria-label={t.label} className="flex w-12 justify-center">{t.icon}</button>
          ))}
        </div>
        <div className="w-[54px] text-center text-[17px] leading-[27px]">POR<br />PTB2</div>
        <div className="w-[105px] text-center text-[17px] leading-[27px]">11:53 AM<br />2/6/2023</div>
        <button aria-label="Notificações" className="relative mr-[18px] h-9 w-[54px]">
          <svg viewBox="0 0 24 24" className="absolute top-1.5 left-4 size-6" aria-hidden="true">
            <path d="M0 0h24v18H10l-5 5v-5H0z" />
            <path d="M5 5.500h14M5 9.500h14M5 13.500h9" stroke="#fff" strokeWidth="1.300" />
          </svg>
          <span className="absolute top-3.5 left-[26px] flex size-7 items-center justify-center rounded-full border border-[#777] bg-[#d2d2d2] text-[17px]">14</span>
        </button>
        <span className="mr-1.5 h-[60px] w-px bg-[#b5b5b5]" />
      </div>
    </footer>
  );
}

export default function App() {
  return (
    <div className="flex h-screen flex-col overflow-hidden bg-white font-['Open_Sans','Noto_Sans',sans-serif]">
      <TabStrip />
      <AddressBar />
      <BookmarksBar />
      <EditorHeader />
      <div className="flex min-h-0 flex-1">
        <Canvas />
        <Scrollbar />
        <Sidebar />
      </div>
      <nav aria-label="Caminho do bloco" className="flex h-9 shrink-0 items-center gap-5 border-t border-[#e0e0e0] bg-white pl-[39px] text-lg text-[#1e1e1e]">
        <button>Post</button>
        <svg viewBox="0 0 8 12" className="h-3 w-2" fill="none" stroke="currentColor" strokeWidth="2" aria-hidden="true">
          <path d="M1 1l5 5-5 5" />
        </svg>
        <button>Parágrafo</button>
      </nav>
      <Taskbar />
    </div>
  );
}
